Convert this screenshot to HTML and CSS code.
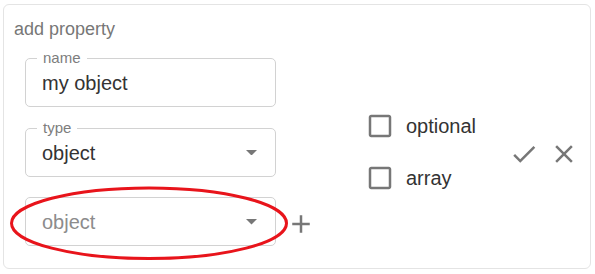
FILE: index.html
```html
<!DOCTYPE html>
<html>
<head>
<meta charset="utf-8">
<link rel="stylesheet" href="styles.css">
</head>
<body>
<div class="card">
  <div class="title">add property</div>
  <div class="row">
    <div class="fields">
      <div class="field">
        <span class="label">name</span>
        <span class="value">my object</span>
      </div>
      <div class="field">
        <span class="label">type</span>
        <span class="value">object</span>
        <svg class="arrow" viewBox="0 0 10 5"><path d="M0 0l5 5 5-5z"/></svg>
      </div>
      <div class="field-line">
        <div class="field">
          <span class="value placeholder">object</span>
          <svg class="arrow" viewBox="0 0 10 5"><path d="M0 0l5 5 5-5z"/></svg>
        </div>
        <svg class="icon plus" viewBox="0 0 24 24"><path d="M19 13h-6v6h-2v-6H5v-2h6V5h2v6h6v2z"/></svg>
      </div>
    </div>
    <div class="checks">
      <div class="check">
        <svg class="icon box" viewBox="0 0 24 24"><path d="M19 5v14H5V5h14m0-2H5c-1.11 0-2 .9-2 2v14c0 1.1.89 2 2 2h14c1.1 0 2-.9 2-2V5c0-1.1-.9-2-2-2z"/></svg>
        <span>optional</span>
      </div>
      <div class="check">
        <svg class="icon box" viewBox="0 0 24 24"><path d="M19 5v14H5V5h14m0-2H5c-1.11 0-2 .9-2 2v14c0 1.1.89 2 2 2h14c1.1 0 2-.9 2-2V5c0-1.1-.9-2-2-2z"/></svg>
        <span>array</span>
      </div>
    </div>
    <div class="actions">
      <svg class="icon" viewBox="0 0 24 24"><path d="M9 16.17L4.83 12l-1.42 1.41L9 19 21 7l-1.41-1.41z"/></svg>
      <svg class="icon" viewBox="0 0 24 24"><path d="M19 6.41L17.59 5 12 10.59 6.41 5 5 6.41 10.59 12 5 17.59 6.41 19 12 13.41 17.59 19 19 17.59 13.41 12z"/></svg>
    </div>
  </div>
</div>
<svg class="annotation" width="595" height="274" viewBox="0 0 595 274">
  <ellipse cx="149" cy="223.2" rx="137.5" ry="35.3" fill="none" stroke="#e8141b" stroke-width="3"/>
</svg>
</body>
</html>
```

FILE: styles.css
```css
html, body {
  margin: 0;
  padding: 0;
  background: #ffffff;
}

body {
  position: relative;
  width: 595px;
  height: 274px;
  overflow: hidden;
  font-family: "Liberation Sans", Arial, sans-serif;
  color: #333333;
}

.card {
  box-sizing: border-box;
  width: 588px;
  height: 265px;
  margin: 4px 0 0 3px;
  padding: 15px 0 0 10px;
  border: 1px solid #e4e4e4;
  border-radius: 6px;
}

.title {
  font-size: 18px;
  line-height: 18px;
  color: #777777;
  margin-bottom: 20px;
}

.row {
  display: flex;
  align-items: center;
  padding-left: 11px;
}

.fields {
  display: flex;
  flex-direction: column;
  gap: 20.5px;
}

.field {
  position: relative;
  box-sizing: border-box;
  width: 251px;
  height: 49px;
  padding: 14px 18px 13px 16px;
  border: 1px solid #d2d2d2;
  border-radius: 5px;
  display: flex;
  align-items: center;
}

.label {
  position: absolute;
  top: -9px;
  left: 11px;
  padding: 0 6px;
  background: #ffffff;
  font-size: 15px;
  line-height: 15px;
  color: #7d7d7d;
}

.value {
  flex: 1;
  font-size: 20px;
  line-height: 20px;
  color: #333333;
}

.value.placeholder {
  color: #8c8c8c;
}

.arrow {
  width: 11px;
  height: 5.5px;
  fill: #777777;
}

.field-line {
  display: flex;
  align-items: center;
}

.icon {
  width: 30px;
  height: 30px;
  fill: #777777;
  flex: none;
}

.plus {
  margin-left: 10px;
  margin-top: 5px;
}

.checks {
  display: flex;
  flex-direction: column;
  gap: 22.5px;
  margin-left: 49px;
}

.check {
  display: flex;
  align-items: center;
  gap: 11px;
  font-size: 20px;
  line-height: 30px;
  color: #333333;
}

.actions {
  display: flex;
  gap: 10px;
  margin-left: 33px;
  margin-top: 4px;
}

.annotation {
  position: absolute;
  left: 0;
  top: 0;
  pointer-events: none;
}
```
